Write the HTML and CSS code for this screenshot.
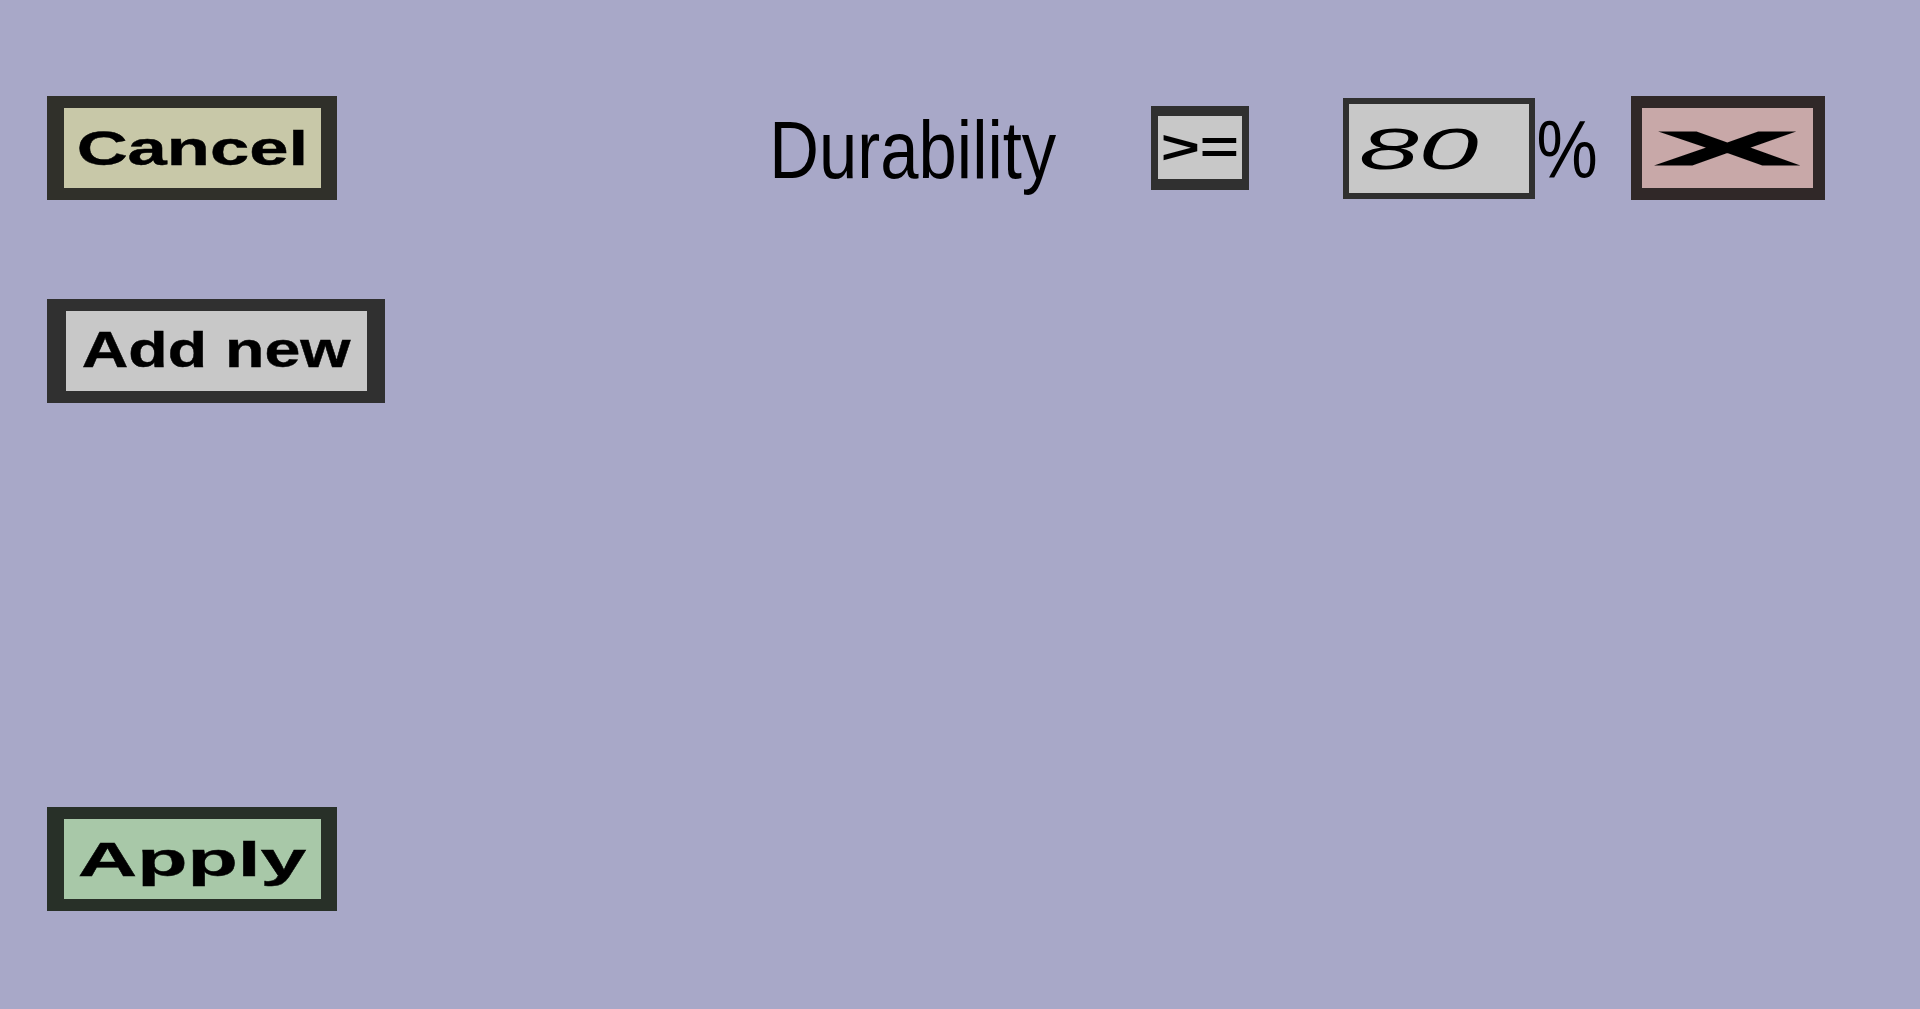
FILE: index.html
```html
<!DOCTYPE html>
<html lang="en">
<head>
<meta charset="utf-8">
<title>Filter</title>
<link rel="stylesheet" href="styles.css">
</head>
<body>
<div class="page">
  <div class="left">
    <button class="btn btn-cancel"><span class="txt t-cancel">Cancel</span></button>
    <button class="btn btn-add"><span class="txt t-add">Add new</span></button>
    <button class="btn btn-apply"><span class="txt t-apply">Apply</span></button>
  </div>
  <div class="filter">
    <div class="label"><span class="narrow">Durability</span></div>
    <button class="op"><span class="op-txt">&gt;=</span></button>
    <div class="field"><span class="field-txt">80</span></div>
    <div class="pct"><span class="narrow">%</span></div>
    <button class="remove"><span class="x-txt">X</span></button>
  </div>
</div>
</body>
</html>
```

FILE: styles.css
```css
* { box-sizing: border-box; }

html, body {
  margin: 0;
  padding: 0;
}

body {
  background: #a8a8c8;
  width: 1920px;
  height: 1009px;
  overflow: hidden;
  font-family: "Liberation Sans", Arial, sans-serif;
  color: #000;
}

.page {
  display: flex;
  align-items: flex-start;
  padding: 96px 0 0 47px;
}

.left {
  display: flex;
  flex-direction: column;
  align-items: flex-start;
  width: 338px;
}

.btn, .op, .remove {
  margin: 0;
  padding: 0;
  border-style: solid;
  display: flex;
  align-items: center;
  justify-content: center;
  font-family: "Liberation Sans", Arial, sans-serif;
  color: #000;
  cursor: pointer;
  overflow: visible;
}

.btn {
  height: 104px;
  font-weight: bold;
  font-size: 49px;
}

.btn-cancel {
  width: 290px;
  border-width: 12px 16px 12px 17px;
  border-color: #30302a;
  background: #c8c8a8;
}

.btn-add {
  width: 338px;
  margin-top: 99px;
  border-width: 12px 18px 12px 19px;
  border-color: #303030;
  background: #c8c8c8;
  font-size: 50px;
}

.btn-apply {
  width: 290px;
  margin-top: 404px;
  border-width: 12px 16px 12px 17px;
  border-color: #283028;
  background: #a8c8a8;
}

.txt {
  display: inline-block;
  white-space: nowrap;
  line-height: 1.15;
  -webkit-text-stroke: 0.4px #000;
}

.t-cancel { transform: scaleX(1.44); }
.t-add { transform: scaleX(1.29); }
.t-apply { transform: scaleX(1.68); }

.filter {
  display: flex;
  align-items: center;
  height: 104px;
  margin-left: 383px;
}

.label {
  width: 290px;
  display: flex;
  justify-content: center;
  margin-top: 6px;
  font-size: 81px;
}

.narrow {
  display: inline-block;
  white-space: nowrap;
  line-height: 1.15;
  transform: scaleX(0.85);
}

.op {
  margin-left: 93px;
  width: 98px;
  height: 84px;
  border-width: 10px 7px 11px 7px;
  border-color: #303030;
  background: #c8c8c8;
  font-size: 46px;
  font-weight: bold;
}

.op-txt {
  display: inline-block;
  white-space: nowrap;
  line-height: 1.15;
  transform: scaleX(1.46);
}

.field {
  margin-left: 94px;
  width: 192px;
  height: 101px;
  border: 6px solid #303030;
  background: #c8c8c8;
  display: flex;
  align-items: center;
  padding: 3px 0 0 10px;
  font-size: 58px;
  font-style: italic;
}

.field-txt {
  display: inline-block;
  white-space: nowrap;
  line-height: 1.15;
  transform-origin: left center;
  transform: scaleX(1.85);
}

.pct {
  width: 65px;
  display: flex;
  justify-content: center;
  margin-top: 6px;
  font-size: 81px;
}

.remove {
  margin-left: 31px;
  width: 194px;
  height: 104px;
  border-width: 12px 12px 12px 11px;
  border-color: #302828;
  background: #c8a8a8;
  font-size: 49px;
  font-weight: bold;
}

.x-txt {
  display: inline-block;
  line-height: 1.15;
  -webkit-text-stroke: 1.2px #000;
  transform: scaleX(4.3);
}
```
